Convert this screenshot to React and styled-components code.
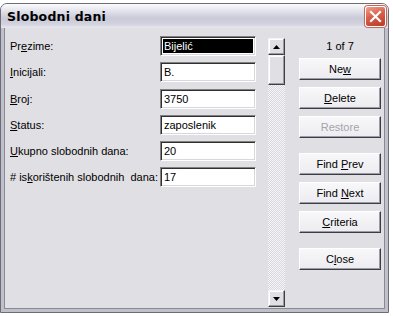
import React from "react";
import styled, { createGlobalStyle } from "styled-components";

const GlobalStyle = createGlobalStyle`
  body {
    margin: 0;
    background: #ffffff;
    font-family: "Liberation Sans", Arial, sans-serif;
  }
`;

const fields = [
  { label: "Prezime:", key: 2, value: "Bijelić", selected: true },
  { label: "Inicijali:", key: 0, value: "B." },
  { label: "Broj:", key: 0, value: "3750" },
  { label: "Status:", key: 0, value: "zaposlenik" },
  { label: "Ukupno slobodnih dana:", key: 0, value: "20" },
  { label: "# iskorištenih slobodnih  dana:", key: 4, value: "17" },
];

const buttons = [
  { text: "New", key: 2 },
  { text: "Delete", key: 0 },
  { text: "Restore", key: 0, disabled: true },
  { text: "Find Prev", key: 5, spaced: true },
  { text: "Find Next", key: 5 },
  { text: "Criteria", key: 0 },
  { text: "Close", key: 1, spaced: true },
];

const Mnemonic = ({ text, at }) => (
  <span>
    {text.slice(0, at)}
    <u>{text[at]}</u>
    {text.slice(at + 1)}
  </span>
);

const App = () => {
  return (
    <>
      <GlobalStyle />
      <Window>
        <TitleBar>
          <Title>Slobodni dani</Title>
          <CloseBox>
            <svg width="13" height="13" viewBox="0 0 13 13">
              <path
                d="M2 2 L11 11 M11 2 L2 11"
                stroke="#ffffff"
                strokeWidth="2.2"
                strokeLinecap="square"
              />
            </svg>
          </CloseBox>
        </TitleBar>

        <Body>
          <FieldGrid>
            {fields.map((f) => (
              <React.Fragment key={f.label}>
                <Label>
                  <Mnemonic text={f.label} at={f.key} />
                </Label>
                <Field>
                  <FieldText selected={f.selected}>{f.value}</FieldText>
                </Field>
              </React.Fragment>
            ))}
          </FieldGrid>

          <ScrollBar>
            <ArrowButton>
              <svg width="7" height="4" viewBox="0 0 7 4">
                <path d="M3.5 0 L7 4 L0 4 Z" fill="#000" />
              </svg>
            </ArrowButton>
            <Thumb />
            <Track />
            <ArrowButton>
              <svg width="7" height="4" viewBox="0 0 7 4">
                <path d="M0 0 L7 0 L3.5 4 Z" fill="#000" />
              </svg>
            </ArrowButton>
          </ScrollBar>

          <ButtonColumn>
            <Counter>1 of 7</Counter>
            {buttons.map((b) => (
              <Button key={b.text} disabled={b.disabled} spaced={b.spaced}>
                {b.disabled ? (
                  <span>{b.text}</span>
                ) : (
                  <Mnemonic text={b.text} at={b.key} />
                )}
              </Button>
            ))}
          </ButtonColumn>
        </Body>
      </Window>
    </>
  );
};

const Window = styled.div`
  margin-top: 3px;
  width: 389px;
  height: 310px;
  box-sizing: border-box;
  display: flex;
  flex-direction: column;
  border: 1px solid #6c6c76;
  border-radius: 7px 7px 0 0;
  background: #e0dfe3;
  overflow: hidden;
`;

const TitleBar = styled.div`
  height: 24px;
  flex: none;
  display: flex;
  align-items: center;
  justify-content: space-between;
  padding: 0 2px 0 6px;
  background: linear-gradient(
    180deg,
    #fbfbfc 0%,
    #e6e6ee 25%,
    #c9c9d7 60%,
    #d4d4e0 85%,
    #e8e8ef 100%
  );
`;

const Title = styled.div`
  font-family: "DejaVu Sans", "Liberation Sans", sans-serif;
  font-weight: bold;
  font-size: 12.5px;
  color: #000;
  letter-spacing: 0.2px;
`;

const CloseBox = styled.div`
  width: 19px;
  height: 19px;
  display: flex;
  align-items: center;
  justify-content: center;
  border: 1px solid #ffffff;
  border-radius: 3px;
  background: linear-gradient(160deg, #f0a08c 0%, #d8604a 45%, #b83a26 100%);
  box-shadow: 0 0 0 1px #c06a5c;
`;

const Body = styled.div`
  flex: 1;
  display: flex;
  align-items: flex-start;
  padding: 8px 0 0 6px;
  border-left: 3px solid #c0c0ca;
  border-right: 3px solid #c0c0ca;
  border-bottom: 3px solid #c0c0ca;
  box-shadow: inset 1px 0 #8a8a96, inset -1px 0 #8a8a96, inset 0 -1px #8a8a96;
`;

const FieldGrid = styled.div`
  display: grid;
  grid-template-columns: 150px 96px;
  grid-auto-rows: 20px;
  row-gap: 6.3px;
  align-items: center;
`;

const Label = styled.div`
  font-size: 11px;
  color: #000;
  white-space: pre;
  u {
    text-underline-offset: 1px;
  }
`;

const Field = styled.div`
  height: 20px;
  box-sizing: border-box;
  background: #ffffff;
  border-top: 1px solid #808080;
  border-left: 1px solid #808080;
  border-right: 1px solid #ffffff;
  border-bottom: 1px solid #ffffff;
  box-shadow: inset 1px 1px #303030, inset -1px -1px #d8d7dc;
  padding: 2px;
  display: flex;
  align-items: center;
`;

const FieldText = styled.div`
  flex: 1;
  height: 14px;
  line-height: 14px;
  font-size: 11px;
  padding-left: 1px;
  color: ${(p) => (p.selected ? "#ffffff" : "#000000")};
  background: ${(p) => (p.selected ? "#000000" : "transparent")};
`;

const ScrollBar = styled.div`
  margin: 2px 0 0 12px;
  width: 17px;
  height: 269px;
  display: flex;
  flex-direction: column;
`;

const raised = `
  box-sizing: border-box;
  background: #e0dfe3;
  border-top: 1px solid #f4f4f6;
  border-left: 1px solid #f4f4f6;
  border-right: 1px solid #404040;
  border-bottom: 1px solid #404040;
  box-shadow: inset -1px -1px #9a9aa2, inset 1px 1px #ffffff;
`;

const ArrowButton = styled.div`
  ${raised}
  height: 17px;
  flex: none;
  display: flex;
  align-items: center;
  justify-content: center;
`;

const Thumb = styled.div`
  ${raised}
  height: 30px;
  flex: none;
`;

const Track = styled.div`
  flex: 1;
  background: repeating-conic-gradient(#f6f6f8 0 25%, #d8d7dc 0 50%) 0 0 / 2px
    2px;
`;

const ButtonColumn = styled.div`
  margin-left: 14px;
  width: 82px;
  display: flex;
  flex-direction: column;
`;

const Counter = styled.div`
  height: 20px;
  margin-bottom: 2px;
  font-size: 11px;
  text-align: center;
  line-height: 20px;
  color: #000;
`;

const Button = styled.div`
  height: 22px;
  box-sizing: border-box;
  margin-top: ${(p) => (p.spaced ? "8px" : "0")};
  margin-bottom: 7px;
  display: flex;
  align-items: center;
  justify-content: center;
  font-size: 11px;
  white-space: pre;
  color: ${(p) => (p.disabled ? "#a4a4ac" : "#000")};
  background: linear-gradient(180deg, #f8f8fa 0%, #ececf0 100%);
  border-top: 1px solid #ffffff;
  border-left: 1px solid #ffffff;
  border-right: 1px solid #3c3c44;
  border-bottom: 1px solid #3c3c44;
  box-shadow: inset -1px -1px #9c9ca6;
  u {
    text-underline-offset: 1px;
  }
`;

export default App;
